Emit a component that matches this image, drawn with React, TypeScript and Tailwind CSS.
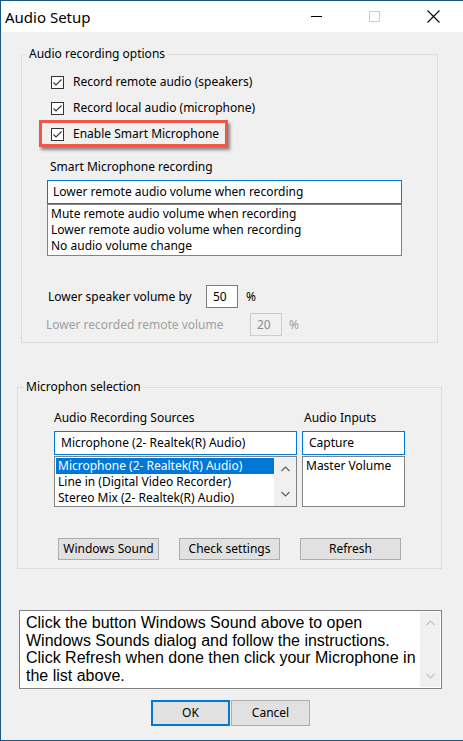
import React from 'react';

const UI_FONT = { fontFamily: '"Noto Sans", "Open Sans", sans-serif' };

// Small check mark drawn inside each checkbox
function CheckBox() {
  return (
    <span className="flex h-[13px] w-[13px] flex-none items-center justify-center border border-[#333333] bg-white">
      <svg width="11" height="11" viewBox="0 0 11 11">
        <polyline points="1.5,5.5 4,8 9.5,2.5" fill="none" stroke="#333333" strokeWidth="1.1" />
      </svg>
    </span>
  );
}

function Chevron({ up, color }: { up?: boolean; color: string }) {
  return (
    <svg width="9" height="6" viewBox="0 0 9 6">
      <polyline
        points={up ? '0.5,5 4.5,1 8.5,5' : '0.5,1 4.5,5 8.5,1'}
        fill="none"
        stroke={color}
        strokeWidth="1.2"
      />
    </svg>
  );
}

const SOURCES = [
  'Microphone (2- Realtek(R) Audio)',
  'Line in (Digital Video Recorder)',
  'Stereo Mix (2- Realtek(R) Audio)',
];

const MODES = [
  'Mute remote audio volume when recording',
  'Lower remote audio volume when recording',
  'No audio volume change',
];

export default function App() {
  return (
    <div
      className="flex h-[741px] w-[463px] flex-col overflow-hidden border-b border-l border-t border-[#1b5584] bg-[#f0f0f0] text-[12px] leading-[16px] text-black"
      style={UI_FONT}
    >
      {/* Title bar */}
      <div className="flex h-[31px] flex-none items-center bg-white">
        <span className="pl-[4px] text-[15px]">Audio Setup</span>
        <div className="ml-auto flex h-full">
          <div className="flex w-[58px] items-center justify-center">
            <span className="h-px w-[11px] bg-black" />
          </div>
          <div className="flex w-[58px] items-center justify-center">
            <span className="h-[11px] w-[11px] border border-[#cccccc]" />
          </div>
          <div className="flex w-[60px] items-center justify-center">
            <svg width="13" height="13" viewBox="0 0 13 13">
              <path d="M0.5 0.5 L12.5 12.5 M12.5 0.5 L0.5 12.5" stroke="#000" strokeWidth="1.1" />
            </svg>
          </div>
        </div>
      </div>

      {/* Audio recording options */}
      <fieldset className="ml-[20px] mt-[14px] w-[417px] border border-[#dcdcdc] pb-[6px]">
        <legend className="ml-[5px] px-[2px]">Audio recording options</legend>

        <div className="mt-[12px] flex flex-col gap-[10px]">
          <label className="flex h-[16px] items-center pl-[29px]">
            <CheckBox />
            <span className="ml-[9px]">Record remote audio (speakers)</span>
          </label>
          <label className="flex h-[16px] items-center pl-[29px]">
            <CheckBox />
            <span className="ml-[9px]">Record local audio (microphone)</span>
          </label>
          <label className="relative flex h-[16px] items-center pl-[29px]">
            {/* highlight annotation */}
            <span className="absolute left-[17px] top-[-6px] h-[27px] w-[189px] border-[3px] border-[#ef5846] shadow-[2px_3px_3px_rgba(0,0,0,0.45)]" />
            <CheckBox />
            <span className="ml-[9px]">Enable Smart Microphone</span>
          </label>
        </div>

        <div className="mt-[17px] pl-[28px]">Smart Microphone recording</div>

        <div className="ml-[25px] mt-[5px] w-[355px]">
          <div className="flex h-[24px] items-center border border-[#0078d7] bg-white pl-[5px]">
            Lower remote audio volume when recording
          </div>
          <div className="flex h-[52px] flex-col border border-[#828282] bg-white pl-[3px] pt-[1px]">
            {MODES.map((m) => (
              <div key={m} className="h-[16px]">
                {m}
              </div>
            ))}
          </div>
        </div>

        <div className="mt-[29px] flex h-[23px] items-center">
          <span className="w-[184px] pl-[26px]">Lower speaker volume by</span>
          <span className="flex h-[23px] w-[32px] items-center border border-[#7a7a7a] bg-white pl-[6px]">50</span>
          <span className="ml-[8px]">%</span>
        </div>
        <div className="mt-[5px] flex h-[23px] items-center text-[#a0a0a0]">
          <span className="w-[228px] pl-[24px]">Lower recorded remote volume</span>
          <span className="flex h-[23px] w-[32px] items-center border border-[#cccccc] pl-[6px] text-[#8c8c8c]">20</span>
          <span className="ml-[7px]">%</span>
        </div>
      </fieldset>

      {/* Microphon selection */}
      <fieldset className="ml-[16px] mt-[36px] w-[425px] border border-[#dcdcdc] pb-[8px]">
        <legend className="ml-[6px] px-[2px]">Microphon selection</legend>

        <div className="ml-[36px] mt-[15px] grid grid-cols-[243px_103px] gap-x-[5px]">
          <div>Audio Recording Sources</div>
          <div className="pl-[2px]">Audio Inputs</div>

          <div className="mt-[5px] flex h-[24px] items-center border border-[#0078d7] bg-white pl-[6px]">
            Microphone (2- Realtek(R) Audio)
          </div>
          <div className="mt-[5px] flex h-[24px] items-center border border-[#0078d7] bg-white pl-[6px]">
            Capture
          </div>

          <div className="mt-[1px] flex h-[51px] border border-[#828282] bg-white">
            <div className="flex-1 pl-[1px] pt-[1px]">
              {SOURCES.map((s, i) => (
                <div
                  key={s}
                  className={
                    i === 0
                      ? 'h-[16px] bg-[#0078d7] pl-[2px] text-white'
                      : 'h-[16px] pl-[2px]'
                  }
                >
                  {s}
                </div>
              ))}
            </div>
            <div className="flex w-[22px] flex-col items-center justify-between bg-[#f0f0f0] py-[9px]">
              <Chevron up color="#606060" />
              <Chevron color="#606060" />
            </div>
          </div>
          <div className="mt-[1px] h-[51px] border border-[#828282] bg-white pl-[3px] pt-[1px]">
            Master Volume
          </div>
        </div>

        <div className="ml-[40px] mt-[31px] flex gap-[20px]">
          <button className="h-[22px] w-[101px] border border-[#adadad] bg-[#e1e1e1]">Windows Sound</button>
          <button className="h-[22px] w-[101px] border border-[#adadad] bg-[#e1e1e1]">Check settings</button>
          <button className="h-[22px] w-[101px] border border-[#adadad] bg-[#e1e1e1]">Refresh</button>
        </div>
      </fieldset>

      {/* Instructions */}
      <div className="ml-[18px] mt-[41px] flex h-[79px] w-[423px] flex-none border border-[#828282] bg-white">
        <p
          className="flex-1 pl-[6px] pt-[3px] text-[16px] leading-[17.6px]"
          style={{ fontFamily: '"Liberation Sans", Arial, sans-serif' }}
        >
          Click the button Windows Sound above to open Windows Sounds dialog and follow the instructions.
          Click Refresh when done then click your Microphone in the list above.
        </p>
        <div className="my-[1px] mr-[1px] flex w-[20px] flex-col items-center justify-between bg-[#f0f0f0] py-[8px]">
          <Chevron up color="#c2c2c2" />
          <Chevron color="#c2c2c2" />
        </div>
      </div>

      <div className="ml-[150px] mt-[11px] flex gap-[1px]">
        <button className="h-[26px] w-[79px] border-2 border-[#0078d7] bg-[#e1e1e1]">OK</button>
        <button className="h-[26px] w-[79px] border border-[#adadad] bg-[#e1e1e1]">Cancel</button>
      </div>
    </div>
  );
}
